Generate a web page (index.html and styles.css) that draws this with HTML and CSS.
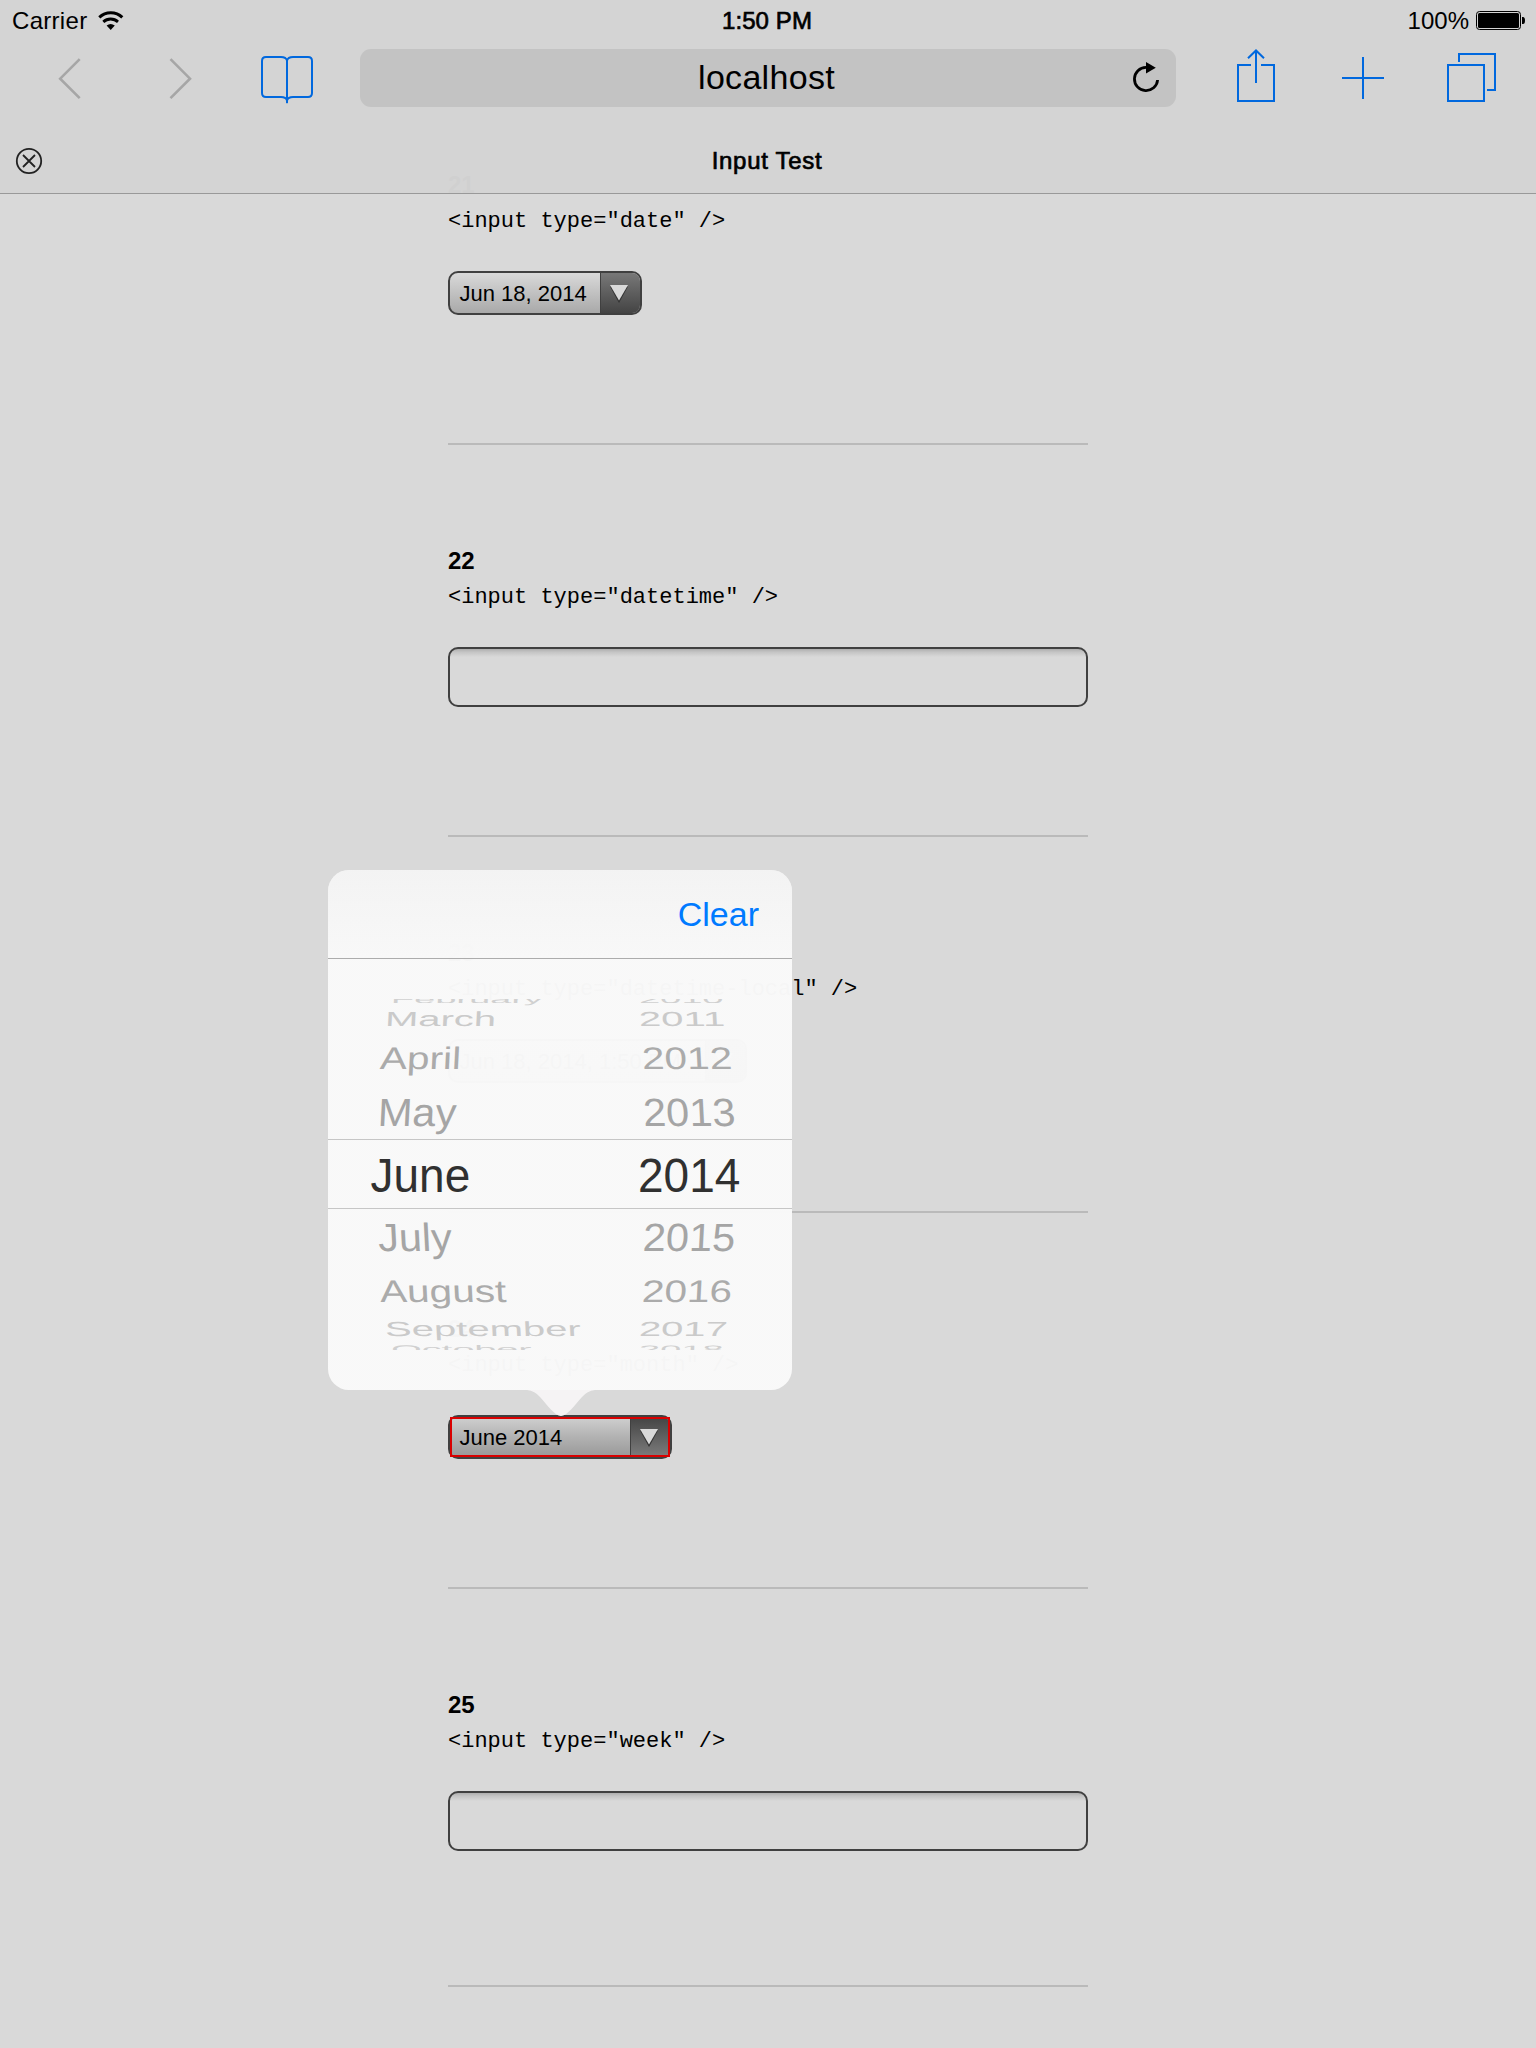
FILE: index.html
```html
<!DOCTYPE html>
<html lang="en">
<head>
<meta charset="utf-8">
<title>Input Test</title>
<link rel="stylesheet" href="styles.css">
</head>
<body>
<header class="chrome">
  <div class="status">
    <div class="status-left">
      <span class="carrier">Carrier</span>
      <svg class="wifi" width="26" height="20" viewBox="98 10 26 20">
        <path d="M99.3 16.3A16.5 16.5 0 0 1 122.3 16.3" fill="none" stroke="#000" stroke-width="3"/>
        <path d="M103.3 20.9A10.8 10.8 0 0 1 118 20.9" fill="none" stroke="#000" stroke-width="2.8"/>
        <path d="M106.6 24.6Q110.7 21.4 114.8 24.6L110.7 29Z"/>
      </svg>
    </div>
    <div class="clock">1:50 PM</div>
    <div class="status-right">
      <span>100%</span>
      <svg width="50" height="20" viewBox="1476 11 50 20">
        <rect x="1476.5" y="11.5" width="44" height="18" rx="3" fill="none" stroke="#000"/>
        <rect x="1478" y="13" width="41" height="15" rx="1.5"/>
        <path d="M1522 17h1q2 0 2 3.5t-2 3.5h-1z"/>
      </svg>
    </div>
  </div>
  <div class="toolbar">
    <svg class="back" width="60" height="58" viewBox="40 49 60 58"><path class="dim" d="M79.7 59.2L60.2 78.7L79.7 98.2"/></svg>
    <svg class="forward" width="60" height="58" viewBox="150 49 60 58"><path class="dim" d="M170.5 59.2L190 78.7L170.5 98.2"/></svg>
    <svg class="book" width="60" height="58" viewBox="257 49 60 58"><path class="blue" d="M287 60.5Q286 57 281 57H266Q262 57 262 61V93Q262 97 266 97H281Q286 97 287 100.5Q288 97 293 97H308Q312 97 312 93V61Q312 57 308 57H293Q288 57 287 60.5ZM287 59V103"/></svg>
    <div class="url">
      <span>localhost</span>
      <svg class="reload" width="30" height="34" viewBox="1131 60 30 34">
        <path d="M1157.6 80A11.6 11.6 0 1 1 1146 67.4" fill="none" stroke="#000" stroke-width="2.8"/>
        <path d="M1146 62L1155.8 67.8L1146 73.6Z"/>
      </svg>
    </div>
    <svg class="share" width="60" height="58" viewBox="1226 49 60 58"><path class="blue" d="M1251 65H1238V101H1274V65H1261M1256 83V51M1248 58.2L1256 50.5L1264 58.2"/></svg>
    <svg class="plus" width="60" height="58" viewBox="1333 49 60 58"><path class="blue" d="M1363 57V99M1342 78H1384"/></svg>
    <svg class="tabs" width="60" height="58" viewBox="1441 49 60 58"><path class="blue" d="M1448 65H1484V101H1448ZM1459 62V54H1495V90H1487"/></svg>
  </div>
  <div class="tabbar">
    <svg class="close" width="28" height="28" viewBox="15 147 28 28"><circle cx="29" cy="161" r="12.2"/><path d="M23 155L35 167M35 155L23 167"/></svg>
    <div class="title">Input Test</div>
  </div>
</header>

<main class="page">
  <section class="case">
    <h2>21</h2>
    <code>&lt;input type="date" /&gt;</code>
    <div class="picker date"><span>Jun 18, 2014</span><i><svg width="20" height="20"><path class="tri-shadow" d="M1 3.5H19L10 20Z"/><path class="tri" d="M1 2H19L10 17.5Z"/></svg></i></div>
  </section>
  <section class="case">
    <h2>22</h2>
    <code>&lt;input type="datetime" /&gt;</code>
    <div class="textbox"></div>
  </section>
  <section class="case">
    <h2>23</h2>
    <code>&lt;input type="datetime-local" /&gt;</code>
    <div class="picker datetime"><span>Jun 18, 2014, 1:50 PM</span><i><svg width="20" height="20"><path class="tri" d="M1 2H19L10 17.5Z"/></svg></i></div>
  </section>
  <section class="case">
    <h2>24</h2>
    <code>&lt;input type="month" /&gt;</code>
    <div class="anchor">
      <div class="picker month"><span>June 2014</span><i><svg width="20" height="20"><path class="tri-shadow" d="M1 3.5H19L10 20Z"/><path class="tri" d="M1 2H19L10 17.5Z"/></svg></i></div>
      <div class="popover">
        <div class="popover-bar">Clear</div>
        <div class="wheels">
          <div class="wheel months">
            <div class="row up d4"><span>February</span></div>
            <div class="row up d3"><span>March</span></div>
            <div class="row up d2"><span>April</span></div>
            <div class="row up d1"><span>May</span></div>
            <div class="row d0"><span>June</span></div>
            <div class="row down d1"><span>July</span></div>
            <div class="row down d2"><span>August</span></div>
            <div class="row down d3"><span>September</span></div>
            <div class="row down d4"><span>October</span></div>
          </div>
          <div class="wheel years">
            <div class="row up d4"><span>2010</span></div>
            <div class="row up d3"><span>2011</span></div>
            <div class="row up d2"><span>2012</span></div>
            <div class="row up d1"><span>2013</span></div>
            <div class="row d0"><span>2014</span></div>
            <div class="row down d1"><span>2015</span></div>
            <div class="row down d2"><span>2016</span></div>
            <div class="row down d3"><span>2017</span></div>
            <div class="row down d4"><span>2018</span></div>
          </div>
        </div>
        <svg class="arrow" width="68" height="26"><path d="M0 0H68Q60 1 55 7C48 15 40 26 34 26S20 15 13 7Q8 1 0 0Z"/></svg>
      </div>
    </div>
  </section>
  <section class="case last">
    <h2>25</h2>
    <code>&lt;input type="week" /&gt;</code>
    <div class="textbox"></div>
  </section>
</main>
</body>
</html>
```
FILE: styles.css
```css
*, *::after { box-sizing: border-box; }
body {
  margin: 0;
  height: 2048px;
  overflow: hidden;
  background: #d9d9d9;
  color: #000;
  font-family: "Liberation Sans", Arial, sans-serif;
}
svg { display: block; flex: none; }

/* Browser chrome */
.chrome {
  position: relative;
  z-index: 2;
  height: 194px;
  background: rgba(211, 211, 211, .985);
  border-bottom: 1px solid #999;
}
.status {
  display: grid;
  grid-template-columns: 1fr auto 1fr;
  height: 41px;
  padding: 0 10px 0 12px;
  font-size: 24px;
  line-height: 41px;
}
.status-left, .status-right { display: flex; align-items: center; }
.status-left { gap: 11px; }
.carrier { letter-spacing: .3px; }
.status-right { justify-content: flex-end; gap: 7px; }
.clock { padding-right: 4px; letter-spacing: .1px; -webkit-text-stroke: .7px #000; }
.toolbar { display: flex; margin-top: 8px; padding-left: 40px; }
.forward { margin-left: 50px; }
.book { margin-left: 47px; }
.dim { fill: none; stroke: #a6a6a6; stroke-width: 2.6; }
.blue { fill: none; stroke: #0068de; stroke-width: 2; }
.url {
  display: grid;
  grid-template-columns: 42px 1fr 45px;
  align-items: center;
  width: 816px;
  height: 58px;
  margin-left: 43px;
  border-radius: 11px;
  background: #c3c3c3;
  font-size: 34px;
  line-height: 56px;
}
.url span { grid-column: 2; height: 58px; letter-spacing: .3px; text-align: center; }
.reload { margin-top: -2px; }
.share { margin-left: 50px; }
.plus { margin-left: 47px; }
.tabs { margin-left: 48px; }
.tabbar {
  display: grid;
  grid-template-columns: 28px 1fr 28px;
  align-items: center;
  height: 66px;
  margin-top: 21px;
  padding: 0 17px 0 15px;
}
.close { fill: none; stroke: #222; stroke-width: 1.8; }
.title {
  text-align: center;
  font-size: 24px;
  letter-spacing: .7px;
  -webkit-text-stroke: .7px #000;
}

/* Test cases */
.page { width: 640px; margin: -125px auto 0; }
.case { padding: 98px 0 128px; border-bottom: 2px solid #bababa; }
.case.last { padding-bottom: 134px; }
h2 { margin: 0; font-size: 24px; line-height: 36px; }
code {
  display: block;
  margin: 3px 0 33px;
  font: 22px/32px "Liberation Mono", "Courier New", monospace;
  white-space: pre;
}
.textbox {
  height: 60px;
  border: 2px solid #404040;
  border-radius: 10px;
  background: linear-gradient(#aeaeae, #c4c4c4 3px, #d9d9d9 8px);
}
.picker {
  display: flex;
  height: 44px;
  border: 2px solid #404040;
  border-radius: 10px;
  overflow: hidden;
  background: linear-gradient(#d9d9d9, #a9a9a9);
  font-size: 22px;
  line-height: 42px;
}
.picker span { flex: 1; padding-left: 9.5px; white-space: nowrap; }
.picker i {
  display: flex;
  align-items: center;
  width: 40px;
  padding-left: 8px;
  border-left: 1px solid #404040;
  background: linear-gradient(#787878, #444);
}
.tri { fill: #d9d9d9; }
.tri-shadow { fill: #333; }
.date { width: 194px; }
.datetime { width: 299px; }
.month {
  width: 224px;
  background: linear-gradient(#d0d0d0, #b2b2b2 50%, #989898);
}
.month i { background: linear-gradient(#444, #7c7c7c); }
.anchor { position: relative; }
.anchor::after {
  content: "";
  position: absolute;
  left: 2px;
  top: 2px;
  width: 220px;
  height: 40px;
  border: 2px solid #d90000;
}

/* Month popover */
.popover {
  position: absolute;
  z-index: 1;
  left: -120px;
  top: -545px;
  width: 464px;
  height: 520px;
  border-radius: 21px;
  background: linear-gradient(rgba(244, 244, 244, .985), rgba(249, 249, 249, .985) 88px);
}
.popover-bar {
  height: 89px;
  padding-right: 33px;
  border-bottom: 1px solid #acacac;
  border-radius: 21px 21px 0 0;
  background: linear-gradient(rgba(243, 243, 243, .8), rgba(248, 248, 248, .8));
  color: #007aff;
  font-size: 34px;
  line-height: 89px;
  text-align: right;
}
.arrow { position: absolute; left: 199px; top: 520px; fill: #f5f3f4; }
.wheels {
  display: grid;
  grid-template-columns: 272px 192px;
  height: 351px;
  margin-top: 40px;
  overflow: hidden;
}
.wheel { display: flex; flex-direction: column; margin-top: -8px; }
.row { display: flex; align-items: center; flex: none; line-height: 1; white-space: nowrap; }
.row span { padding-top: 1px; transform: skewX(var(--lean, 0deg)) scaleY(var(--squash)); }
.d0 { --squash: 1.04; height: 70px; border: solid #c6c6c6; border-width: 1px 0; color: #303030; font-size: 46px; }
.d1 { --squash: .95; height: 55px; color: #a5a5a5; font-size: 41.5px; }
.d1 span { padding-top: 2px; }
.d2 { --squash: .77; height: 53px; color: #ababab; font-size: 40.5px; }
.d3 { --squash: .51; height: 24px; color: #cacaca; font-size: 40px; }
.d3 span { padding-top: 0; }
.d4 { --squash: .28; height: 16px; color: #d0d0d0; font-size: 38px; }
.months .down.d4 { font-size: 39.5px; }
.months .d0 { padding-left: 42.5px; }
.months .d1 { padding-left: 49.5px; }
.months .d2 { padding-left: 52px; }
.months .d3 { padding-left: 57px; }
.months .d4 { padding-left: 62.5px; }
.years .d0 { padding-left: 38px; }
.years .d1 { padding-left: 42.5px; }
.years .d2 { padding-left: 41.5px; }
.years .d3 { padding-left: 39px; }
.years .d4 { padding-left: 38.5px; }
.months .up { --lean: -3deg; }
.months .down { --lean: 3deg; }
.years .up { --lean: 3deg; }
.years .down { --lean: -3deg; }
```
